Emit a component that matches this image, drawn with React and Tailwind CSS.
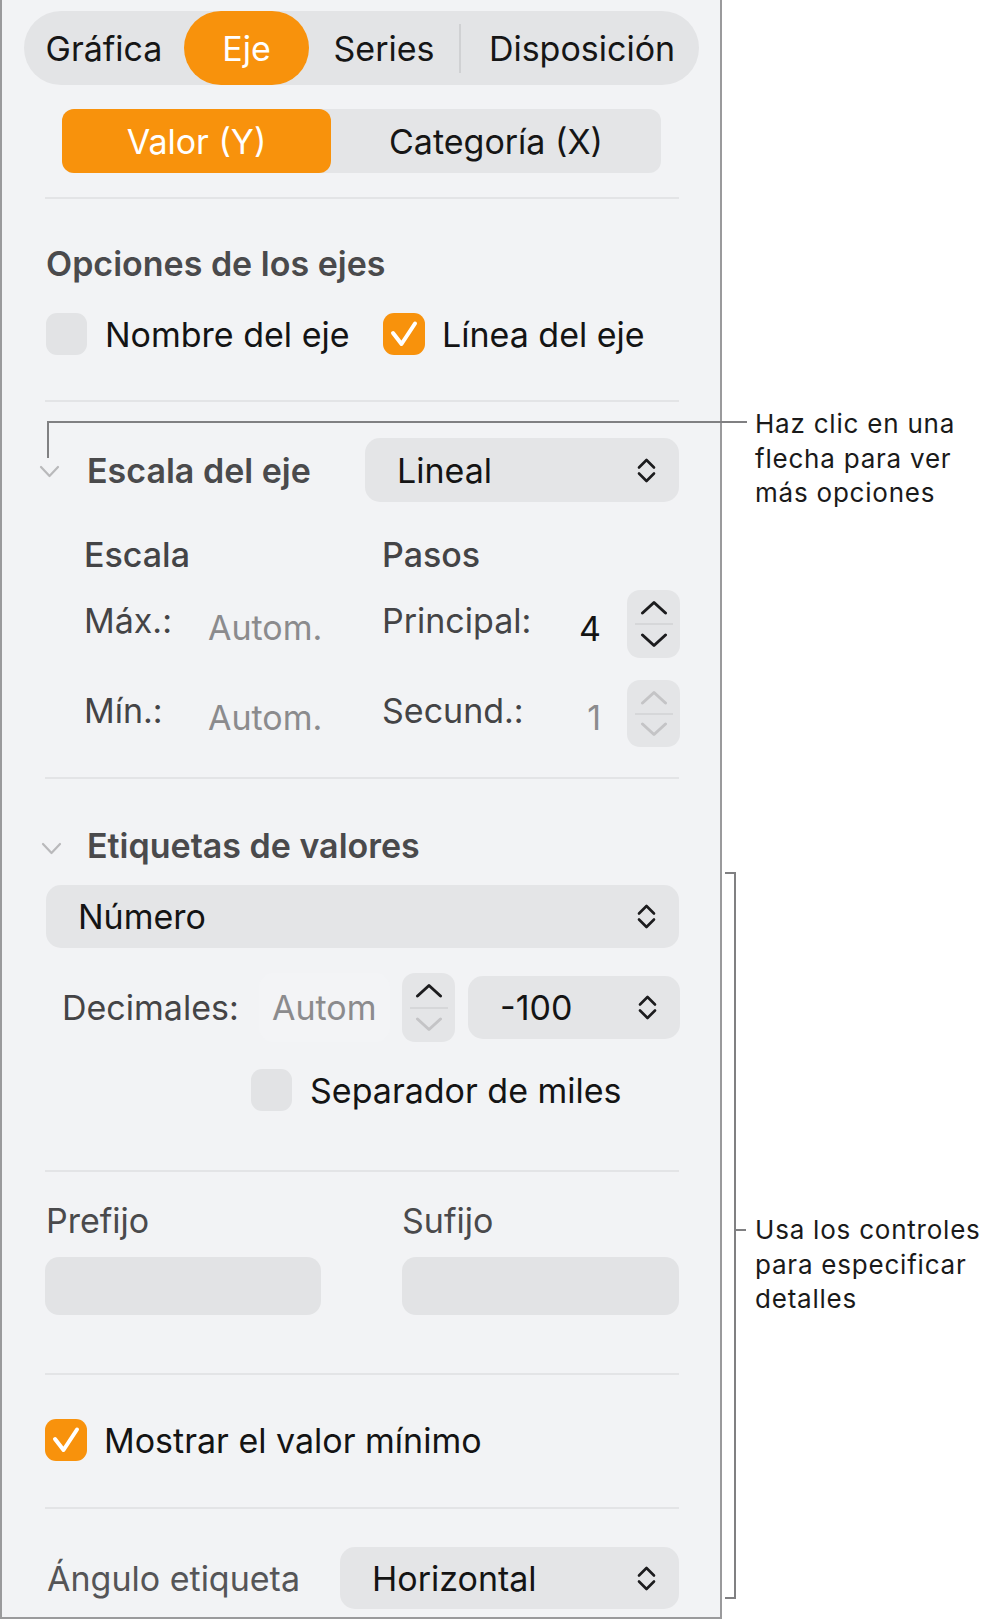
import React from "react";

const ORANGE = "bg-[#f8920c]";

function UpDown() {
  return (
    <svg width="21" height="27" viewBox="0 0 21 27" fill="none" stroke="#1c1c1e" strokeWidth="2.6" strokeLinecap="round" strokeLinejoin="round">
      <path d="M3 10.5 L10.5 3 L18 10.5" />
      <path d="M3 16.5 L10.5 24 L18 16.5" />
    </svg>
  );
}

function Chevron({ up, color }) {
  return (
    <svg width="28" height="15" viewBox="0 0 28 15" fill="none" stroke={color} strokeWidth="3" strokeLinecap="round" strokeLinejoin="round">
      {up ? <path d="M2.5 13 L14 2.5 L25.5 13" /> : <path d="M2.5 2 L14 12.5 L25.5 2" />}
    </svg>
  );
}

function Disclosure() {
  return (
    <svg width="21" height="13" viewBox="0 0 21 13" fill="none" stroke="#b9b9bb" strokeWidth="2.2" strokeLinecap="round" strokeLinejoin="round">
      <path d="M2 2 L10.5 11 L19 2" />
    </svg>
  );
}

function Stepper({ upColor, downColor, h }) {
  return (
    <div className={`w-[53px] ${h} rounded-[13px] bg-[#e4e5e7] flex flex-col items-center`}>
      <div className="flex-1 flex items-center justify-center pt-[2px]">
        <Chevron up color={upColor} />
      </div>
      <div className="w-[38px] h-[2px] bg-[#d6d7d9]" />
      <div className="flex-1 flex items-center justify-center pb-[2px]">
        <Chevron color={downColor} />
      </div>
    </div>
  );
}

function Box({ checked }) {
  if (!checked) return <div className="w-[41px] h-[42px] rounded-[11px] bg-[#e2e3e5] shrink-0" />;
  return (
    <div className={`w-[42px] h-[42px] rounded-[11px] ${ORANGE} shrink-0 flex items-center justify-center`}>
      <svg width="42" height="42" viewBox="0 0 42 42" fill="none" stroke="#ffffff" strokeWidth="4" strokeLinecap="round" strokeLinejoin="round">
        <path d="M10 20 L18.5 31 L32 10.5" />
      </svg>
    </div>
  );
}

function Select({ label, cls, pad = "pl-[32px]" }) {
  return (
    <div className={`${cls} rounded-[15px] bg-[#e4e5e7] flex items-center justify-between ${pad} pr-[22px]`}>
      <span className="text-[34px] text-[#141414]">{label}</span>
      <UpDown />
    </div>
  );
}

const Rule = ({ mt }) => <div className={`${mt} ml-[43px] w-[634px] h-[2px] bg-[#e3e4e6]`} />;

export default function App() {
  return (
    <div className="relative flex w-[998px] h-[1620px] bg-white font-['Inter','Liberation_Sans',sans-serif] overflow-hidden">
      {/* inspector panel */}
      <div className="w-[722px] h-[1619px] border-x-2 border-b-2 border-[#9a9a9c] bg-[#f2f3f5] flex flex-col shrink-0">
        {/* top tabs */}
        <div className="mt-[11px] ml-[22px] w-[675px] h-[74px] rounded-full bg-[#e3e4e6] flex items-center text-[34px] text-[#161616]">
          <div className="w-[160px] text-center">Gráfica</div>
          <div className={`w-[125px] h-full rounded-full ${ORANGE} text-white flex items-center justify-center`}>Eje</div>
          <div className="w-[150px] text-center">Series</div>
          <div className="w-[2px] h-[49px] bg-[#d0d1d3]" />
          <div className="flex-1 text-center pl-[4px]">Disposición</div>
        </div>

        {/* axis switch */}
        <div className="mt-[24px] ml-[60px] w-[599px] h-[64px] rounded-[12px] bg-[#e4e5e7] flex items-center text-[34px] text-[#161616]">
          <div className={`w-[269px] h-full rounded-[12px] ${ORANGE} text-white flex items-center justify-center`}>Valor (Y)</div>
          <div className="flex-1 text-center">Categoría (X)</div>
        </div>

        <Rule mt="mt-[24px]" />

        <div className="mt-[45px] ml-[44px] h-[40px] leading-[40px] text-[34px] font-semibold text-[#4a4a4c]">Opciones de los ejes</div>

        <div className="mt-[29px] ml-[44px] h-[42px] flex items-center text-[34px] text-[#141414]">
          <div className="w-[337px] flex items-center">
            <Box />
            <span className="ml-[18px]">Nombre del eje</span>
          </div>
          <Box checked />
          <span className="ml-[17px]">Línea del eje</span>
        </div>

        <Rule mt="mt-[45px]" />

        {/* axis scale */}
        <div className="mt-[36px] h-[64px] flex items-center">
          <div className="ml-[37px] w-[48px] pt-[3px]">
            <Disclosure />
          </div>
          <div className="w-[278px] text-[34px] font-semibold text-[#4a4a4c]">Escala del eje</div>
          <Select label="Lineal" cls="w-[314px] h-[64px]" />
        </div>

        <div className="mt-[33px] ml-[82px] grid grid-cols-[298px_298px] text-[34px] text-[#444446]">
          <div className="h-[40px] leading-[40px] font-medium">Escala</div>
          <div className="h-[40px] leading-[40px] font-medium">Pasos</div>

          <div className="mt-[15px] h-[68px] flex items-center">
            <span className="w-[124px] pb-[7px]">Máx.:</span>
            <span className="pt-[7px] text-[#8b8b8d]">Autom.</span>
          </div>
          <div className="mt-[15px] h-[68px] flex items-center">
            <span className="flex-1 pb-[7px]">Principal:</span>
            <span className="w-[40px] text-right pt-[8px] text-[#141414]">4</span>
            <div className="ml-[26px]">
              <Stepper upColor="#1c1c1e" downColor="#1c1c1e" h="h-[68px]" />
            </div>
          </div>

          <div className="mt-[22px] h-[67px] flex items-center">
            <span className="w-[124px] pb-[7px]">Mín.:</span>
            <span className="pt-[7px] text-[#8b8b8d]">Autom.</span>
          </div>
          <div className="mt-[22px] h-[67px] flex items-center">
            <span className="flex-1 pb-[7px]">Secund.:</span>
            <span className="w-[40px] text-right pt-[8px] text-[#8b8b8d]">1</span>
            <div className="ml-[26px]">
              <Stepper upColor="#c4c4c6" downColor="#c4c4c6" h="h-[67px]" />
            </div>
          </div>
        </div>

        <Rule mt="mt-[30px]" />

        {/* value labels */}
        <div className="mt-[46px] h-[40px] flex items-center">
          <div className="ml-[39px] w-[46px] pt-[6px]">
            <Disclosure />
          </div>
          <div className="text-[34px] font-semibold text-[#4a4a4c]">Etiquetas de valores</div>
        </div>

        <div className="mt-[20px] ml-[44px]">
          <Select label="Número" cls="w-[633px] h-[63px]" />
        </div>

        <div className="mt-[25px] ml-[60px] h-[69px] flex items-center text-[34px]">
          <span className="w-[197px] text-[#444446]">Decimales:</span>
          <div className="w-[131px] h-[69px] rounded-[14px] bg-[#f3f4f6] flex items-center pl-[13px] text-[#8b8b8d]">Autom</div>
          <div className="ml-[12px]">
            <Stepper upColor="#1c1c1e" downColor="#c4c4c6" h="h-[69px]" />
          </div>
          <div className="ml-[13px]">
            <Select label="-100" cls="w-[212px] h-[63px]" pad="pl-[32px]" />
          </div>
        </div>

        <div className="mt-[27px] ml-[249px] h-[42px] flex items-center text-[34px] text-[#141414]">
          <Box />
          <span className="ml-[18px]">Separador de miles</span>
        </div>

        <Rule mt="mt-[59px]" />

        {/* prefix / suffix */}
        <div className="mt-[29px] ml-[44px] h-[40px] leading-[40px] flex text-[34px] text-[#4a4a4c]">
          <span className="w-[356px]">Prefijo</span>
          <span>Sufijo</span>
        </div>
        <div className="mt-[16px] ml-[43px] flex">
          <div className="w-[276px] h-[58px] rounded-[14px] bg-[#e2e3e5]" />
          <div className="ml-[81px] w-[277px] h-[58px] rounded-[14px] bg-[#e2e3e5]" />
        </div>

        <Rule mt="mt-[58px]" />

        <div className="mt-[44px] ml-[43px] h-[42px] flex items-center text-[34px] text-[#141414]">
          <Box checked />
          <span className="ml-[17px]">Mostrar el valor mínimo</span>
        </div>

        <Rule mt="mt-[46px]" />

        <div className="mt-[38px] h-[62px] flex items-center">
          <span className="ml-[45px] w-[293px] text-[34px] text-[#555557]">Ángulo etiqueta</span>
          <Select label="Horizontal" cls="w-[339px] h-[62px]" pad="pl-[32px]" />
        </div>
      </div>

      {/* callout: disclosure arrow */}
      <div className="absolute left-[47px] top-[421px] w-[700px] h-[2px] bg-[#808082]" />
      <div className="absolute left-[47px] top-[421px] w-[2px] h-[37px] bg-[#808082]" />
      <div className="absolute left-[755px] top-[407px] text-[26px] leading-[34.5px] tracking-[0.03em] text-[#1a1a1a]">
        Haz clic en una
        <br />
        flecha para ver
        <br />
        más opciones
      </div>

      {/* callout: bracket */}
      <div className="absolute left-[734px] top-[872px] w-[2px] h-[727px] bg-[#808082]" />
      <div className="absolute left-[725px] top-[872px] w-[10px] h-[2px] bg-[#808082]" />
      <div className="absolute left-[725px] top-[1597px] w-[10px] h-[2px] bg-[#808082]" />
      <div className="absolute left-[735px] top-[1229px] w-[11px] h-[2px] bg-[#808082]" />
      <div className="absolute left-[755px] top-[1213px] text-[26px] leading-[34.5px] tracking-[0.03em] text-[#1a1a1a]">
        Usa los controles
        <br />
        para especificar
        <br />
        detalles
      </div>
    </div>
  );
}
